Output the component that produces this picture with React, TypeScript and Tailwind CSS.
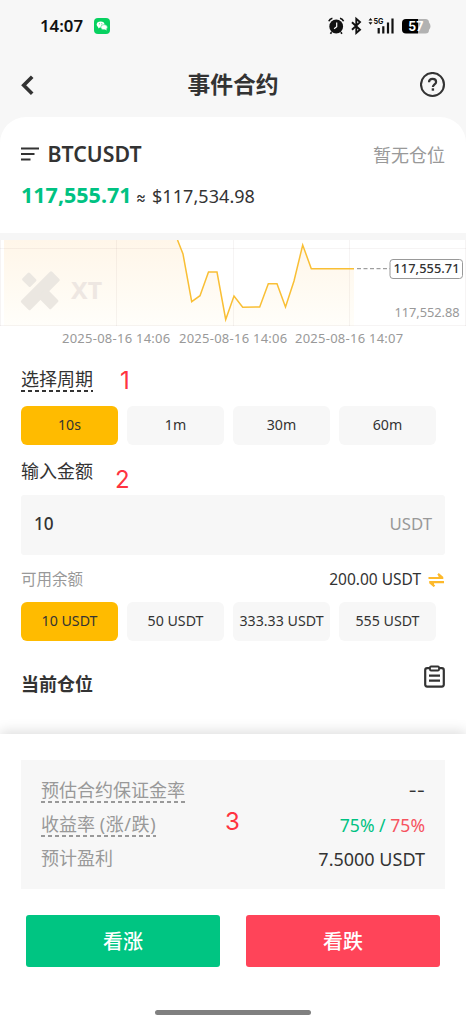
import React from "react";

const linePoints =
  "177.5,0 183,14 191.7,61.7 200,55.7 208.5,32 217,32 225.7,79.5 234,56 242.7,67.3 259.7,67 268.3,43.7 277,43.7 285.5,67 294,41 302.7,5 311.3,28.7 354,28.7";

function StatusBar() {
  return (
    <div className="flex h-[52px] items-center justify-between pl-[40px] pr-[35px]">
      <div className="flex items-center gap-[11px]">
        <span className="w-[43px] whitespace-nowrap text-[16.8px] font-semibold leading-none text-[#111]">14:07</span>
        <svg width="16" height="16" viewBox="0 0 16 16">
          <rect width="16" height="16" rx="4" fill="#07d160" />
          <ellipse cx="6.6" cy="6.5" rx="3.9" ry="3.1" fill="#fff" />
          <path d="M4.4 8.8 4 10.6 6 9.3Z" fill="#fff" />
          <ellipse cx="10.1" cy="9.2" rx="3.3" ry="2.6" fill="#fff" stroke="#07d160" strokeWidth=".5" />
          <path d="m11 11.5 1.6.9-.4-1.7Z" fill="#fff" />
          <circle cx="5.4" cy="5.7" r=".5" fill="#07d160" />
          <circle cx="7.8" cy="5.7" r=".5" fill="#07d160" />
        </svg>
      </div>
      <svg width="104" height="20" viewBox="0 0 104 20" className="shrink-0">
        <circle cx="9.2" cy="10.5" r="6.9" fill="#111" />
        <path d="M1.8 5.2C2.4 3.6 3.6 2.6 5.4 2.2M13 2.2c1.8.4 3 1.4 3.6 3M4.6 16.2l-1.2 1.6M13.8 16.2l1.2 1.6" stroke="#111" strokeWidth="1.6" fill="none" />
        <path d="M9.7 6.5v4.3l-2.6 2" stroke="#fff" strokeWidth="1.2" fill="none" />
        <path d="m25 6.2 8 7.6-3.7 3.1V2.8l3.7 3.3-8 7.6" stroke="#111" strokeWidth="1.9" fill="none" />
        <path d="m41.5 4.6 2-2.6 2 2.6ZM41.5 6.2l2 2.6 2-2.6Z" fill="#111" />
        <text x="46.5" y="8.3" fontSize="8" fontWeight="700" fontFamily="Inter, sans-serif" fill="#111" textLength="10" lengthAdjust="spacingAndGlyphs">5G</text>
        <path d="M51.7 12v5.5M56.3 10.2v7.3M61 6.5v11M65.5 2.5v15" stroke="#111" strokeWidth="2.2" />
        <path d="M79 3h12v14.5H79a4 4 0 0 1-4-4V7a4 4 0 0 1 4-4Z" fill="#000" />
        <path d="M91 3h7.5q3.5 0 3.5 3.5 1.5 1.5 1.5 3.7T102 14q0 3.5-3.5 3.5H91Z" fill="#b2b2b2" />
        <text x="81.3" y="14.8" fontSize="12.5" fontWeight="700" fontFamily="Inter, sans-serif" fill="#fff" textLength="15" lengthAdjust="spacingAndGlyphs">57</text>
      </svg>
    </div>
  );
}

function Header() {
  return (
    <header className="flex h-[65px] items-center justify-between px-[20px]">
      <svg width="26" height="22" viewBox="0 0 26 22">
        <path d="M12.2 2.8 3.7 11.3l8.5 8.5" stroke="#333" strokeWidth="3.6" fill="none" />
      </svg>
      <h1 className="pt-[2px] text-[22.8px] font-bold leading-none text-[#333]">事件合约</h1>
      <svg width="26" height="26" viewBox="0 0 26 26" fill="none" stroke="#333">
        <circle cx="12.5" cy="12.5" r="11.5" strokeWidth="2.1" />
        <path d="M9 10.3c0-2.3 1.5-3.5 3.600-3.500s3.500 1.200 3.500 3.100c0 2.400-3.200 2.500-3.200 5" strokeWidth="2.2" />
        <path d="M11.7 17.5h2.4" strokeWidth="2.4" />
      </svg>
    </header>
  );
}

function Quote() {
  return (
    <section className="h-[116px] rounded-t-[26px] bg-white px-[21px] pt-[25px]">
      <div className="flex h-[24px] items-center justify-between">
        <div className="flex items-center">
          <svg width="26.5" height="16" viewBox="0 0 26.5 16">
            <path d="M0 2.5h18M0 8h13.5M0 13.5h9.5" stroke="#333" strokeWidth="2.2" />
          </svg>
          <span className="text-[21.3px] font-semibold leading-none text-[#333]">BTCUSDT</span>
        </div>
        <span className="pt-[2px] text-[18px] leading-none text-[#999]">暂无仓位</span>
      </div>
      <div className="mt-[17px] flex h-[24px] items-baseline whitespace-nowrap leading-[24px]">
        <span className="w-[115px] text-[21.5px] font-bold text-[#00c282]">117,555.71</span>
        <span className="w-[16px] font-['Inter'] text-[15px] text-[#333]">≈</span>
        <span className="text-[18px] tracking-[0.06px] text-[#333]">$117,534.98</span>
      </div>
    </section>
  );
}

function Chart() {
  return (
    <section className="border-t-[7px] border-[#f6f6f6]">
      <svg width="466" height="87" viewBox="0 0 466 87" className="block">
        <defs>
          <linearGradient id="area" x1="0" y1="0" x2="0" y2="87" gradientUnits="userSpaceOnUse">
            <stop offset="0" stopColor="#fff6e9" />
            <stop offset=".5" stopColor="#fffaf1" />
            <stop offset="1" stopColor="#fffefa" />
          </linearGradient>
        </defs>
        <polygon points={`4,0 ${linePoints} 354,86 4,86`} fill="url(#area)" />
        <path d="M0 8.5H466M0 85.5H466M.5 0V86M116.5 0V86M233.5 0V86M349.5 0V86M465.5 0V86" stroke="#7c6a66" strokeOpacity=".07" fill="none" />
        <g fill="#ebe7e1">
          <rect x="-5.8" y="-5.2" width="11.6" height="10.4" rx="1.5" transform="translate(29.3 39.8) rotate(45)" />
          <rect x="-21.8" y="-6.6" width="43.6" height="13.2" rx="1.5" transform="translate(40.3 50.8) rotate(-45)" />
          <rect x="-9" y="-6.2" width="18" height="12.4" rx="1.5" transform="translate(48.3 59) rotate(45)" />
        </g>
        <text x="71" y="58.8" fontSize="22.5" fontWeight="700" fontFamily="Noto Sans, sans-serif" fill="#eee7e2" textLength="31" lengthAdjust="spacingAndGlyphs">XT</text>
        <polyline points={linePoints} fill="none" stroke="#f9bf35" strokeWidth="1.5" />
        <path d="M357 28.7h33" stroke="#888" strokeWidth="1" strokeDasharray="4 2.5" />
        <rect x="390" y="19.5" width="72.5" height="19" rx="3" fill="#fff" stroke="#999" />
        <text x="393.5" y="33" fontSize="12.8" fontWeight="500" fontFamily="Noto Sans, sans-serif" fill="#333" textLength="66">117,555.71</text>
        <text x="394.5" y="77" fontSize="12.8" fontFamily="Noto Sans, sans-serif" fill="#999" textLength="65">117,552.88</text>
      </svg>
      <div className="flex h-[23px] gap-[8px] whitespace-nowrap pl-[62px] text-[13px] leading-[22px] tracking-[0.25px] text-[#999]">
        <span className="w-[109px]">2025-08-16 14:06</span>
        <span className="w-[108px]">2025-08-16 14:06</span>
        <span className="w-[109px]">2025-08-16 14:07</span>
      </div>
    </section>
  );
}

function Choices({ items }: { items: string[] }) {
  return (
    <div className="grid h-[39px] w-[415px] grid-cols-4 gap-[9px]">
      {items.map((item, i) => (
        <button
          key={item}
          className={`flex items-center justify-center whitespace-nowrap rounded-[6px] pb-px text-[14.2px] leading-none text-[#333] ${i === 0 ? "bg-[#ffbb00]" : "bg-[#f7f7f7]"}`}
        >
          {item}
        </button>
      ))}
    </div>
  );
}

function Hint({ children, dark }: { children: React.ReactNode; dark?: boolean }) {
  return (
    <span className="inline-flex flex-col text-[18px] leading-[22px]">
      <span className={dark ? "text-[#333]" : "text-[#999]"}>{children}</span>
      <span
        className={`h-[1.5px] ${dark ? "bg-[repeating-linear-gradient(90deg,#333_0_4px,transparent_4px_7px)]" : "bg-[repeating-linear-gradient(90deg,#999_0_4px,transparent_4px_7px)]"}`}
      />
    </span>
  );
}

function OrderForm() {
  return (
    <section className="relative h-[384px] px-[21px] pt-[18px]">
      <div className="h-[38px]">
        <Hint dark>选择周期</Hint>
      </div>
      <Choices items={["10s", "1m", "30m", "60m"]} />
      <div className="flex h-[50px] items-center pt-[2px] text-[18px] leading-none text-[#333]">输入金额</div>
      <div className="flex h-[60px] items-center justify-between rounded-[3px] bg-[#f7f7f7] px-[13px] pb-[2px] leading-none">
        <span className="text-[17.2px] font-medium text-[#333]">10</span>
        <span className="text-[16.8px] text-[#999]">USDT</span>
      </div>
      <div className="flex h-[47px] items-center justify-between pt-[2px] leading-none">
        <span className="text-[15.5px] text-[#999]">可用余额</span>
        <span className="flex items-center gap-[7px] text-[15.5px] text-[#333]">
          200.00 USDT
          <svg width="17" height="14" viewBox="0 0 17 14" fill="none" stroke="#fdb92b" strokeWidth="2.2">
            <path d="M.5 5h14.8M10 .9l4.6 4M16 9.2H1.2M6.5 13.300 1.900 9.300" />
            <path d="M10.500 1v3.700h4ZM6 13V9.500H2Z" fill="#fdb92b" stroke="none" />
          </svg>
        </span>
      </div>
      <Choices items={["10 USDT", "50 USDT", "333.33 USDT", "555 USDT"]} />
      <div className="mt-[23px] flex h-[39px] items-start justify-between">
        <span className="pt-[11px] text-[18px] font-bold leading-none text-[#333]">当前仓位</span>
        <svg width="21" height="24" viewBox="0 0 21 24" fill="none" stroke="#333" strokeWidth="2.2" className="mt-px">
          <rect x="1.2" y="3.2" width="18.6" height="18.4" rx="2" />
          <rect x="6" y="1.5" width="9" height="4" rx="1" fill="#fff" strokeWidth="1.8" />
          <path d="M5 10.7h11M5 15.7h11" />
        </svg>
      </div>
      <span className="absolute left-[120px] top-[19px] font-['Inter'] text-[24px] leading-none text-[#ff3340]">1</span>
      <span className="absolute left-[115px] top-[118px] font-['Inter'] text-[24px] leading-none text-[#ff3340]">2</span>
    </section>
  );
}

function Summary() {
  return (
    <footer className="relative h-[290px] bg-white px-[21px] pt-[26px] shadow-[0_-3px_12px_rgba(0,0,0,0.13)]">
      <div className="flex h-[129px] flex-col bg-[#f7f7f7] px-[20px] pt-[19px] text-[18px]">
        <div className="flex h-[34px] items-start justify-between">
          <Hint>预估合约保证金率</Hint>
          <span className="font-['Inter'] leading-[24px] text-[#333]">--</span>
        </div>
        <div className="flex h-[34px] items-start justify-between">
          <Hint>
            收益率 <span className="tracking-[0.6px]">(涨/跌)</span>
          </Hint>
          <span className="text-[17.6px] leading-[24px] text-[#00c282]">
            75% / <span className="text-[#f6535f]">75%</span>
          </span>
        </div>
        <div className="flex items-start justify-between">
          <span className="leading-[22px] text-[#999]">预计盈利</span>
          <span className="text-[18px] leading-[24px] text-[#333]">7.5000 USDT</span>
        </div>
      </div>
      <div className="mt-[26px] grid h-[52px] grid-cols-2 gap-[26px] px-[5px]">
        <button className="rounded-[3px] bg-[#00c582] pt-[2px] text-[20px] font-medium leading-none text-white">看涨</button>
        <button className="rounded-[3px] bg-[#ff4459] pt-[2px] text-[20px] font-medium leading-none text-white">看跌</button>
      </div>
      <div className="mx-auto mt-[43px] h-[5px] w-[156px] rounded-full bg-[#808080]" />
      <span className="absolute left-[225px] top-[76px] font-['Inter'] text-[24px] leading-none text-[#ff3340]">3</span>
    </footer>
  );
}

export default function App() {
  return (
    <main className="h-[1024px] w-[466px] overflow-hidden bg-[#f7f7f7] font-['Noto_Sans','Noto_Sans_CJK_SC',sans-serif]">
      <StatusBar />
      <Header />
      <div className="bg-white">
        <div className="bg-[#f7f7f7]">
          <Quote />
        </div>
        <Chart />
        <OrderForm />
        <Summary />
      </div>
    </main>
  );
}
